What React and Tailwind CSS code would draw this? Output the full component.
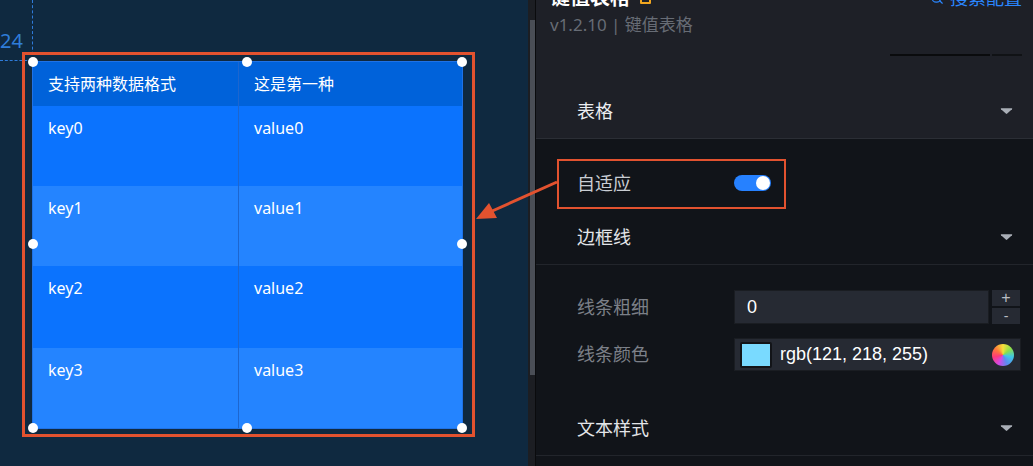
import React from "react";
import { Search } from "lucide-react";

const Chevron = () => (
  <svg width="13" height="8" viewBox="0 0 13 8" className="block">
    <path d="M1.2 1.2 L11.8 1.2 Q12.6 1.4 12 2.2 L7.2 6.6 Q6.5 7.2 5.8 6.6 L1 2.2 Q0.4 1.4 1.2 1.2 Z" fill="#a9aeb6" />
  </svg>
);

const Handle = ({ x, y }) => (
  <div
    className="absolute w-[10px] h-[10px] rounded-full bg-white"
    style={{ left: x - 5, top: y - 5 }}
  />
);

const rows = [
  { k: "key0", v: "value0", bg: "bg-[#0b73fe]" },
  { k: "key1", v: "value1", bg: "bg-[#2484ff]" },
  { k: "key2", v: "value2", bg: "bg-[#0b73fe]" },
  { k: "key3", v: "value3", bg: "bg-[#2484ff]" },
];

export default function App() {
  return (
    <div className="relative w-[1033px] h-[466px] overflow-hidden flex font-['Noto_Sans','Noto_Sans_CJK_SC',sans-serif]">
      {/* Canvas */}
      <div className="relative w-[528px] h-full bg-[#0f2940] shrink-0">
        {/* guides */}
        <div className="absolute left-[32px] top-0 h-[60px] border-l-[1.5px] border-dashed border-[#2f7bd9]" />
        <div className="absolute left-0 top-[60px] w-[32px] border-t-[1.5px] border-dashed border-[#2f7bd9]" />
        <div className="absolute right-[505px] top-[28px] text-[20px] leading-[26px] text-[#2f7dd8]">224</div>

        {/* widget */}
        <div className="pt-[61px] pl-[32px]">
          <div className="w-[431px] h-[368px] flex flex-col text-white text-[16px] border border-[#1f72e6] overflow-hidden">
            <div className="h-[44px] flex bg-[#0062da] shrink-0">
              <div className="w-[206px] pl-[15px] leading-[44px] border-r border-[#1d66cf]">支持两种数据格式</div>
              <div className="flex-1 pl-[15px] leading-[44px]">这是第一种</div>
            </div>
            {rows.map((r, i) => (
              <div key={r.k} className={`flex ${r.bg} ${i === 2 ? "h-[82px]" : "h-[80px]"} shrink-0`}>
                <div className="w-[206px] pl-[15px] leading-[44px] border-r border-[#1d66cf]">{r.k}</div>
                <div className="flex-1 pl-[15px] leading-[44px]">{r.v}</div>
              </div>
            ))}
          </div>
        </div>

        {/* selection frame */}
        <div className="absolute left-[22px] top-[52px] w-[453px] h-[385px] border-[3px] border-[#e2522f]" />
        <Handle x={33} y={62} />
        <Handle x={247} y={62} />
        <Handle x={462} y={62} />
        <Handle x={33} y={244} />
        <Handle x={462} y={244} />
        <Handle x={33} y={428} />
        <Handle x={247} y={428} />
        <Handle x={462} y={428} />
      </div>

      {/* scrollbar */}
      <div className="relative w-[7px] h-full bg-[#1c1e23] shrink-0">
        <div className="absolute left-[2px] top-[20px] w-[5px] h-[355px] bg-[#4a4e56]" />
      </div>
      <div className="w-[1px] h-full bg-[#0a0b0d] shrink-0" />

      {/* Right panel */}
      <div className="flex-1 h-full bg-[#111419] flex flex-col">
        <div className="h-[139px] bg-[#1e2027] border-b border-[#2b2e35] flex flex-col shrink-0">
          <div className="h-[10px] flex items-end justify-between pl-[14px] pr-[11px]">
            <div className="flex items-center gap-[10px] leading-[24px]">
              <span className="text-[20px] font-bold text-white">键值表格</span>
              <span className="w-[11px] h-[11px] border-2 border-[#f2a61f] rounded-[1px]" />
            </div>
            <div className="flex items-center gap-[6px] leading-[24px] text-[#2a86ff]">
              <Search size={14} strokeWidth={2} />
              <span className="text-[18px]">搜索配置</span>
            </div>
          </div>
          <div className="mt-[5px] h-[20px] pl-[14px] text-[17px] leading-[20px] text-[#676c75]">v1.2.10 | 键值表格</div>
          <div className="mt-[19px] self-end mr-[11px] w-[132px] h-[2px] flex">
            <div className="w-[100px] bg-[#0a0b0d]" />
            <div className="w-[2px]" />
            <div className="flex-1 bg-[#101215]" />
          </div>
          <div className="mt-[35px] h-[40px] flex items-center justify-between pl-[41px] pr-[20px]">
            <span className="text-[18px] text-[#eceef1]">表格</span>
            <Chevron />
          </div>
        </div>

        <div className="relative flex flex-col">
          <div className="absolute left-[21px] top-[20px] w-[229px] h-[50px] border-2 border-[#e2522f]" />
          <div className="mt-[24px] h-[40px] flex items-center pl-[41px]">
            <span className="w-[157px] text-[18px] text-[#c9cdd3]">自适应</span>
            <div className="w-[37px] h-[16px] rounded-full bg-[#2681ff] flex items-center justify-end pr-[1px]">
              <div className="w-[14px] h-[14px] rounded-full bg-white" />
            </div>
          </div>
          <div className="mt-[14px] h-[48px] pb-[8px] border-b border-[#22252b] flex items-center justify-between pl-[41px] pr-[20px]">
            <span className="text-[18px] text-[#e3e5e8] leading-[40px]">边框线</span>
            <Chevron />
          </div>

          <div className="mt-[25px] h-[34px] flex items-center pl-[41px] pr-[12px]">
            <span className="w-[157px] text-[18px] text-[#7c8088]">线条粗细</span>
            <div className="w-[255px] h-[34px] bg-[#262a33] border border-[#1a1d22] flex items-center pl-[12px] text-[18px] text-white font-['Liberation_Sans',sans-serif]">0</div>
            <div className="ml-[3px] w-[28px] h-[34px] flex flex-col gap-[2px]">
              <div className="flex-1 bg-[#262a33] flex items-center justify-center text-[#b9bdc4] text-[16px] leading-none font-['Liberation_Sans',sans-serif]">+</div>
              <div className="flex-1 bg-[#262a33] flex items-center justify-center text-[#b9bdc4] text-[14px] leading-none font-['Liberation_Sans',sans-serif]">-</div>
            </div>
          </div>

          <div className="mt-[14px] h-[33px] flex items-center pl-[41px] pr-[12px]">
            <span className="w-[157px] text-[18px] text-[#7c8088]">线条颜色</span>
            <div className="flex-1 h-[33px] bg-[#262a33] border border-[#1a1d22] flex items-center pl-[5px] pr-[6px]">
              <div className="w-[32px] h-[26px] bg-[rgb(121,218,255)] border-2 border-[#121418] rounded-[2px]" />
              <span className="ml-[8px] text-[18px] text-white font-['Liberation_Sans',sans-serif]">rgb(121, 218, 255)</span>
              <div className="ml-auto w-[22px] h-[22px] rounded-full bg-[conic-gradient(#f7e03a,#8be04a,#3ec8e8,#5a8cf0,#d24ae8,#ff3a7a,#ff7a3a,#f7e03a)]" />
            </div>
          </div>

          <div className="mt-[37px] h-[48px] pb-[8px] border-b border-[#22252b] flex items-center justify-between pl-[41px] pr-[20px]">
            <span className="text-[18px] text-[#e3e5e8] leading-[40px]">文本样式</span>
            <Chevron />
          </div>
        </div>
      </div>

      {/* arrow */}
      <svg className="absolute left-0 top-0 pointer-events-none" width="1033" height="466">
        <line x1="557" y1="182" x2="490" y2="212" stroke="#e2522f" strokeWidth="3" />
        <polygon points="476,219 489,203 497,218" fill="#e2522f" />
      </svg>
    </div>
  );
}
